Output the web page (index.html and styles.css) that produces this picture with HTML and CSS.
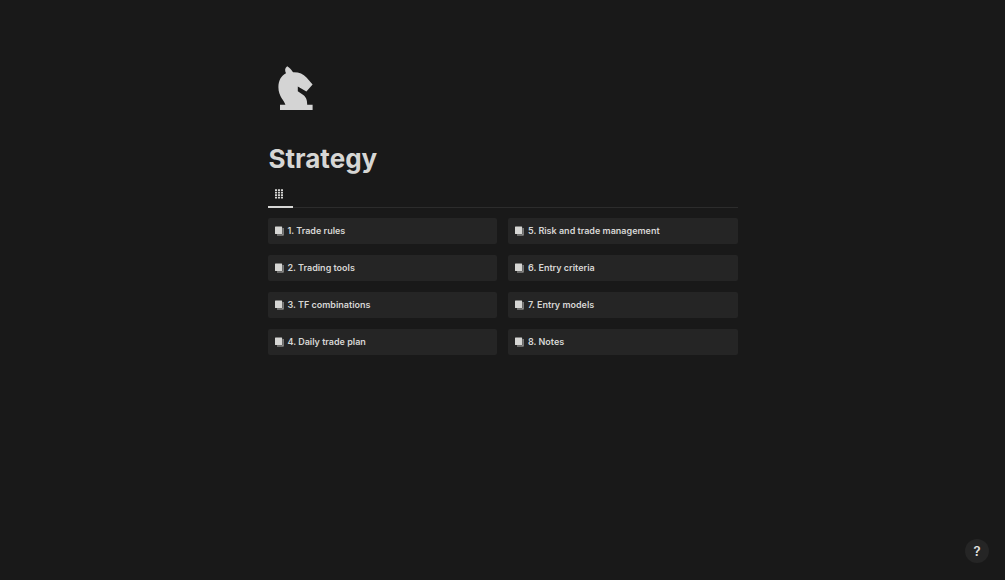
FILE: index.html
```html
<!DOCTYPE html>
<html lang="en">
<head>
    <meta charset="UTF-8">
    <meta name="viewport" content="width=device-width, initial-scale=1.0">
    <title>Strategy</title>
    <link rel="stylesheet" href="styles.css">
</head>
<body>

    <!-- shared icon -->
    <svg class="icon-defs" aria-hidden="true">
        <symbol id="pages" viewBox="0 0 9 10">
            <path d="M7.6 2H8.6V9.6H2V8.6H7.6Z" fill="#b4b4b2"/>
            <rect x="0" y="0.5" width="7.1" height="7.5" rx="0.5" fill="#d6d6d4"/>
        </symbol>
    </svg>

    <main class="page">
        <svg class="page-icon" viewBox="0 0 52 52" aria-hidden="true">
            <path d="M19.2 4.2C21.5 5.6 24 8.2 25 10.2C31 10 35 11.8 38.5 15.6L44.6 22.6L38.4 29.6L29.8 24.6V29.2L35.3 33C38 35.2 39.2 37.5 39.2 42.8H44.6V48H12V42.8H17.4C16.4 38.5 10.4 34.5 10.4 25.2C10.4 18.5 13.3 13.4 18 11.2C16.6 8.6 16.8 5.8 19.2 4.2Z" fill="#d4d4d4"/>
        </svg>

        <h1 class="page-title">Strategy</h1>

        <div class="tabs">
            <button class="tab active" type="button" aria-label="Gallery view">
                <svg class="tab-icon" viewBox="0 0 8 10" aria-hidden="true">
                    <path d="M0 0.3h2.1v1.8h-2.1zM3 0.3h2.1v1.8h-2.1zM6 0.3h2v1.8h-2zM0 2.8h2.1v1.8h-2.1zM3 2.8h2.1v1.8h-2.1zM6 2.8h2v1.8h-2zM0 5.3h2.1v1.8h-2.1zM3 5.3h2.1v1.8h-2.1zM6 5.3h2v1.8h-2zM0 7.8h2.1v1.8h-2.1zM3 7.8h2.1v1.8h-2.1zM6 7.8h2v1.8h-2z" fill="#d6d6d4"/>
                </svg>
            </button>
        </div>

        <nav class="gallery">
            <a class="card" href="#"><svg class="card-icon"><use href="#pages"/></svg>1. Trade rules</a>
            <a class="card" href="#"><svg class="card-icon"><use href="#pages"/></svg>2. Trading tools</a>
            <a class="card" href="#"><svg class="card-icon"><use href="#pages"/></svg>3. TF combinations</a>
            <a class="card" href="#"><svg class="card-icon"><use href="#pages"/></svg>4. Daily trade plan</a>
            <a class="card" href="#"><svg class="card-icon"><use href="#pages"/></svg>5. Risk and trade management</a>
            <a class="card" href="#"><svg class="card-icon"><use href="#pages"/></svg>6. Entry criteria</a>
            <a class="card" href="#"><svg class="card-icon"><use href="#pages"/></svg>7. Entry models</a>
            <a class="card" href="#"><svg class="card-icon"><use href="#pages"/></svg>8. Notes</a>
        </nav>
    </main>

    <button class="help-button" type="button" aria-label="Help">?</button>

</body>
</html>
```

FILE: styles.css
```css
* {
    box-sizing: border-box;
}

body {
    margin: 0;
    background-color: #191919;
    color: #d6d6d4;
    font-family: Inter, "Liberation Sans", sans-serif;
}

.icon-defs {
    display: none;
}

.page {
    max-width: 502px;
    margin: 0 auto;
    padding: 62px 16px;
}

.page-icon {
    display: block;
    width: 52px;
    height: 52px;
}

.page-title {
    margin: 28px 0 0;
    padding-left: 1px;
    font-size: 26px;
    line-height: 34px;
    font-weight: 700;
}

.tabs {
    display: flex;
    margin-top: 8px;
    border-bottom: 1px solid #2c2c2c;
}

.tab {
    display: flex;
    align-items: center;
    padding: 5px 10px 7px 7px;
    margin-bottom: -1px;
    border: none;
    background: none;
    cursor: pointer;
}

.tab.active {
    border-bottom: 2px solid #d6d6d4;
}

.tab-icon {
    width: 8px;
    height: 10px;
}

.gallery {
    display: grid;
    grid-template-columns: 1fr 1fr;
    grid-template-rows: repeat(4, auto);
    grid-auto-flow: column;
    gap: 11px;
    margin-top: 10px;
}

.card {
    display: flex;
    align-items: center;
    gap: 4px;
    padding: 5px 7px;
    border-radius: 2px;
    background-color: #252525;
    color: #d6d6d4;
    font-size: 9px;
    line-height: 16px;
    font-weight: 600;
    text-decoration: none;
}

.card:hover {
    background-color: #2c2c2c;
}

.card-icon {
    width: 9px;
    height: 10px;
}

.help-button {
    position: fixed;
    right: 16px;
    bottom: 17px;
    width: 24px;
    height: 24px;
    padding: 0;
    border: none;
    border-radius: 50%;
    background-color: #252525;
    color: #e2e2e0;
    font-family: inherit;
    font-size: 13px;
    font-weight: 600;
    cursor: pointer;
}
```
